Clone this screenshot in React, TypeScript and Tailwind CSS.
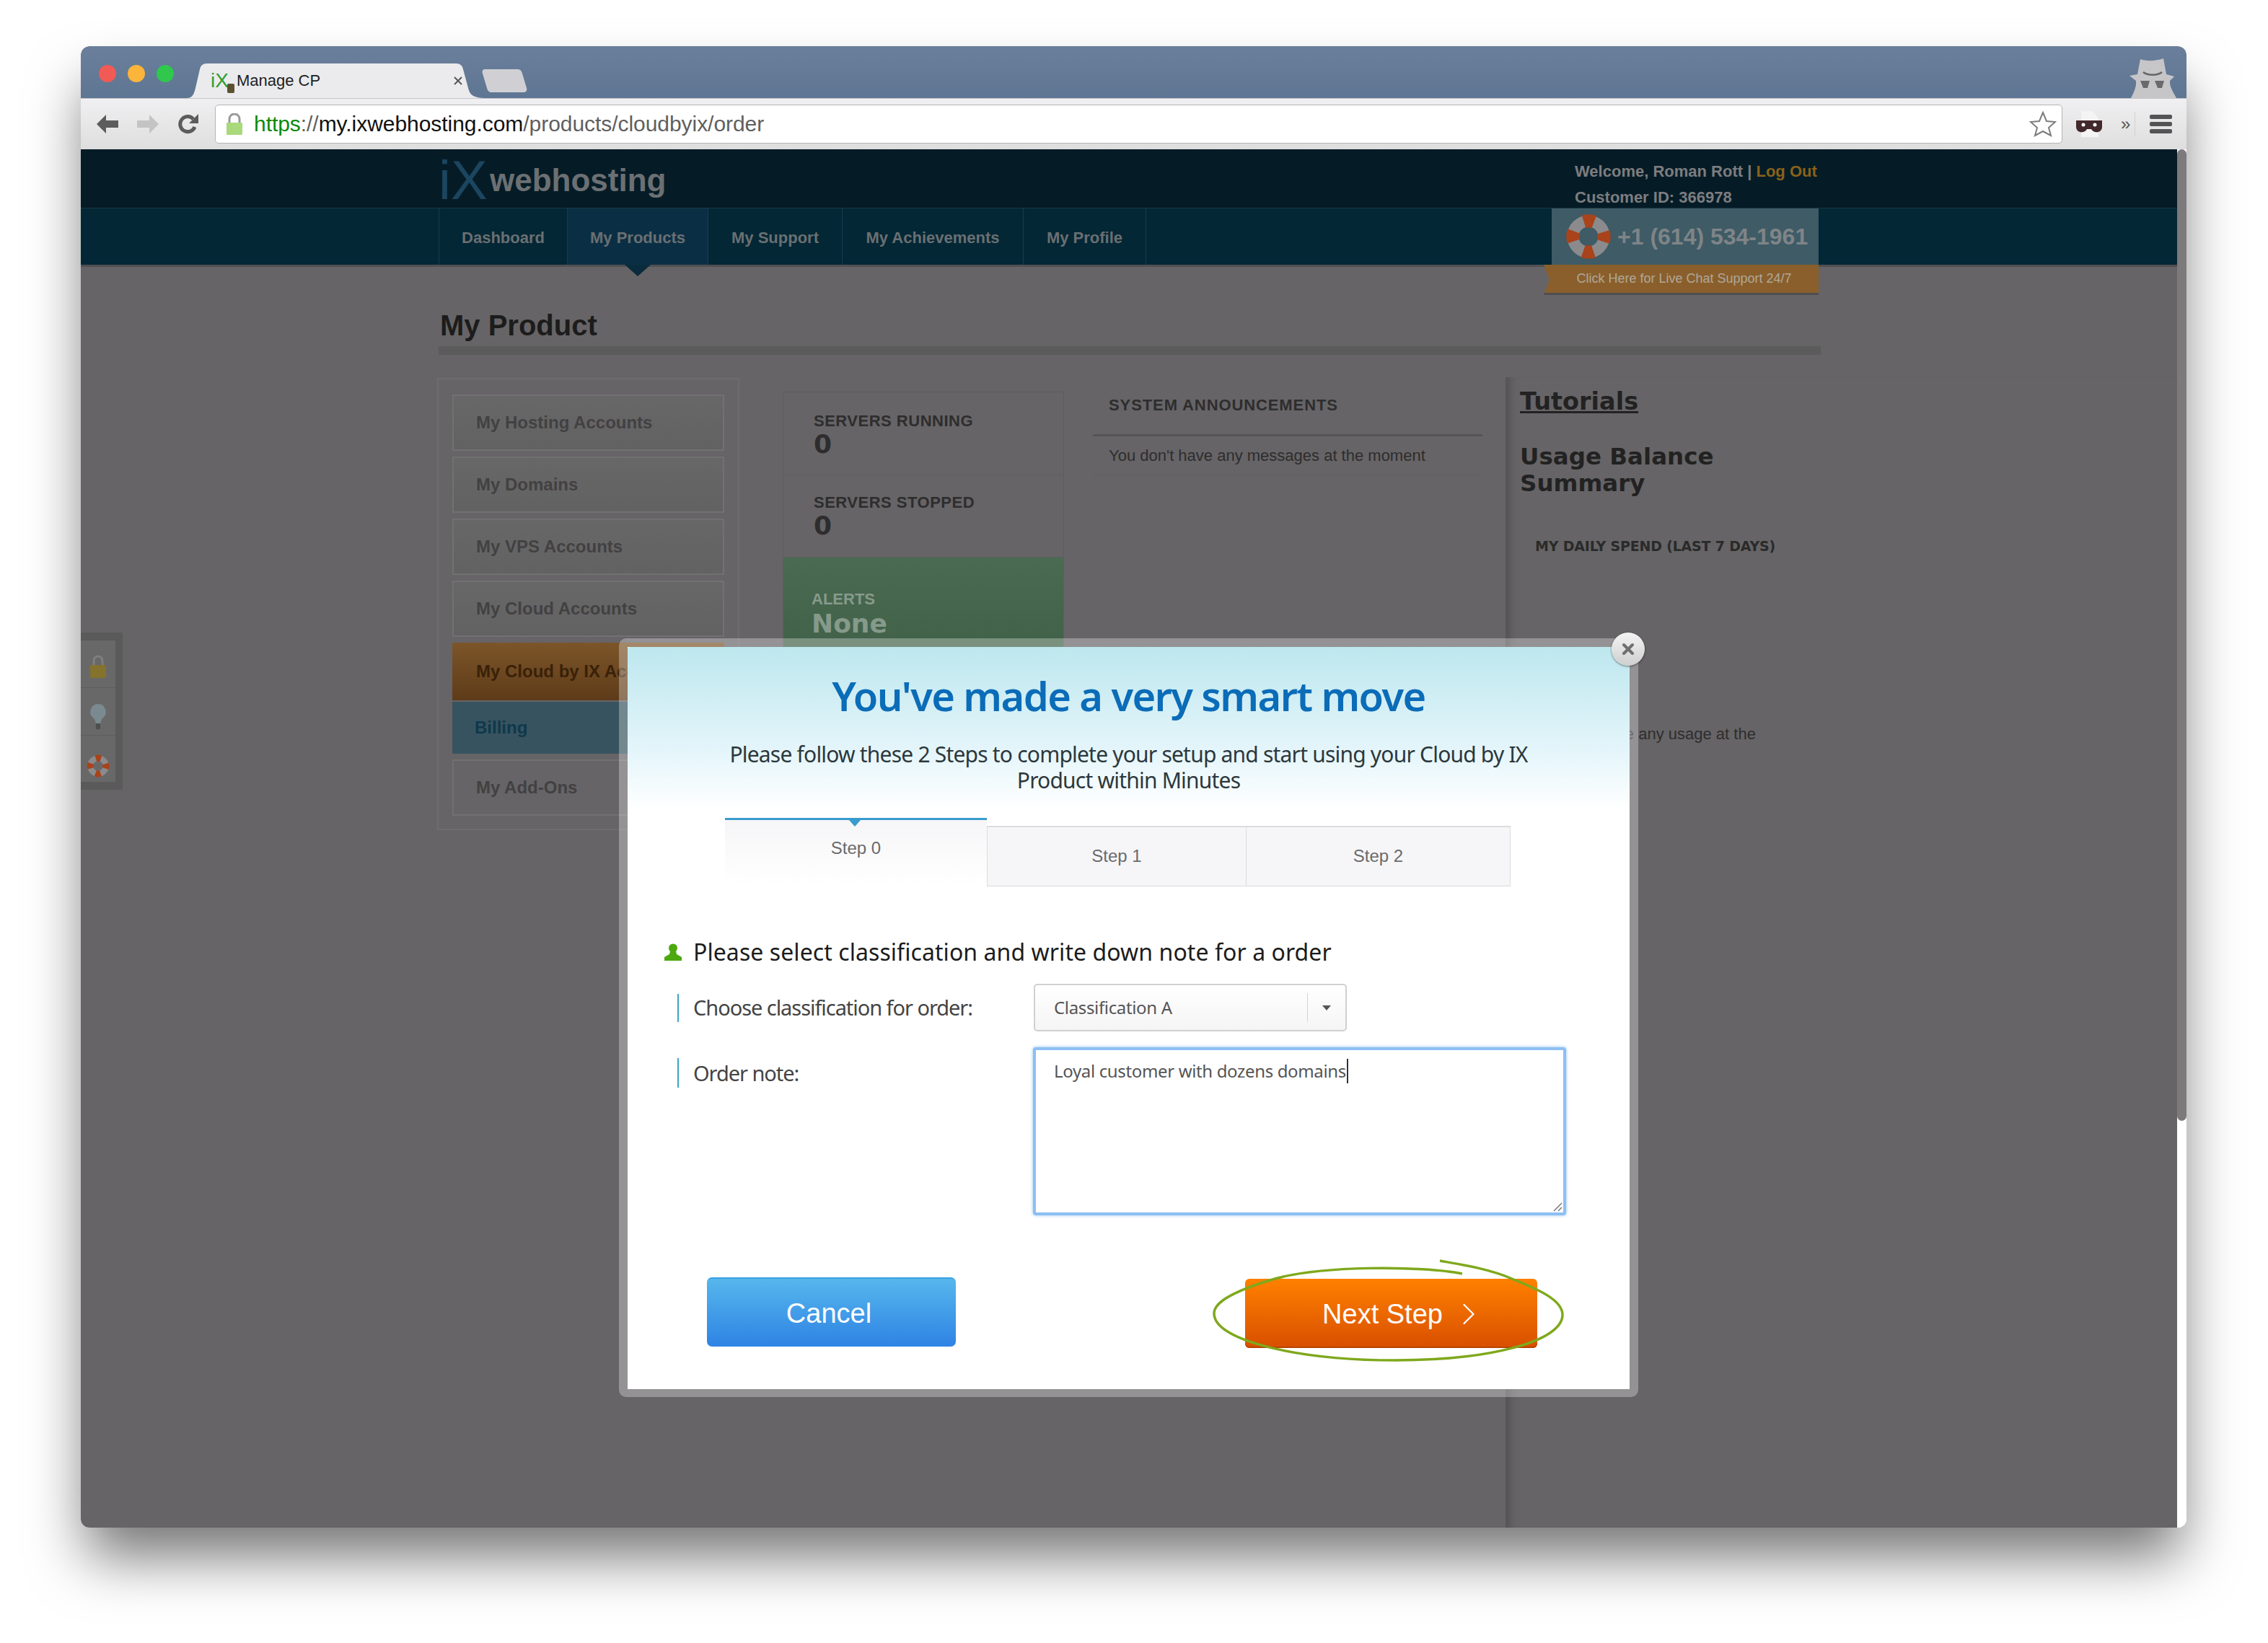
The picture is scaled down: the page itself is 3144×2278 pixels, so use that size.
import { ChevronRight, X } from 'lucide-react'

const sideItems = ['My Hosting Accounts', 'My Domains', 'My VPS Accounts', 'My Cloud Accounts']
const navItems = [
  { label: 'Dashboard', width: 'w-[178px]' },
  { label: 'My Products', width: 'w-[195px]', active: true },
  { label: 'My Support', width: 'w-[186px]' },
  { label: 'My Achievements', width: 'w-[251px]' },
  { label: 'My Profile', width: 'w-[170px]' },
]

function Lifebuoy({ size }: { size: number }) {
  return (
    <svg width={size} height={size} viewBox="0 0 40 40" className="shrink-0">
      <circle cx="20" cy="20" r="13.5" fill="none" stroke="#8b8b8d" strokeWidth="10" />
      <circle cx="20" cy="20" r="13.5" fill="none" stroke="#a8431b" strokeWidth="11.5" strokeDasharray="9 12.2" strokeDashoffset="4.5" />
    </svg>
  )
}

function Favicon() {
  return (
    <span className="relative flex h-[36px] w-[35px] items-center font-['Liberation_Sans',sans-serif] text-[28px] leading-none text-[#2f9e2f]">
      iX
      <span className="absolute bottom-[1px] right-[2px] h-[13px] w-[10px] rounded-[2px] bg-[#5d5030]" />
    </span>
  )
}

function Toolbar() {
  return (
    <div className="flex h-[71px] items-center border-t border-[#c4c6ca] bg-gradient-to-b from-[#f0f0f2] to-[#dedede]">
      <svg width="36" height="30" viewBox="0 0 36 30" className="ml-[19px]">
        <path d="M16 2 3 15l13 13v-8h17v-10H16z" fill="#5c5c5c" />
      </svg>
      <svg width="36" height="30" viewBox="0 0 36 30" className="ml-[20px]">
        <path d="M20 2l13 13-13 13v-8H3v-10h17z" fill="#c4c4c4" />
      </svg>
      <svg width="30" height="32" viewBox="0 0 30 32" className="ml-[23px]">
        <path d="M24 20a10.5 10.5 0 1 1-2-11" fill="none" stroke="#5c5c5c" strokeWidth="5" />
        <path d="M29 2v13H16z" fill="#5c5c5c" />
      </svg>
      <div className="ml-[22px] flex h-[54px] w-[2561px] items-center rounded-[5px] border border-[#b4b4b6] bg-white pl-[14px] pr-[7px]">
        <svg width="24" height="30" viewBox="0 0 24 30">
          <path d="M5 14V8a7 7 0 0 1 14 0v6" fill="none" stroke="#9a9a9a" strokeWidth="3" />
          <rect x="1" y="13" width="22" height="17" rx="1.5" fill="#a9d97b" />
        </svg>
        <span className="ml-[15px] text-[30px] leading-none tracking-[-0.05px] text-[#5f5f5f]">
          <span className="text-[#0b8a0b]">https</span>
          ://
          <span className="text-[#111]">my.ixwebhosting.com</span>
          /products/cloudbyix/order
        </span>
        <svg width="38" height="36" viewBox="0 0 38 36" className="ml-auto">
          <path d="M19 2l5 12 12 1-9 8 3 11-11-6-11 6 3-11-9-8 12-1z" fill="#fff" stroke="#7c7c7c" strokeWidth="2" />
        </svg>
      </div>
      <svg width="38" height="36" viewBox="0 0 38 36" className="ml-[18px]">
        <path d="M8 0h16l8 10v26H8z" fill="#f4f4f4" />
        <path d="M1 13h36v9c0 8-11 10-15 3h-6c-4 7-15 5-15-3z" fill="#43282c" />
        <circle cx="11" cy="19" r="2.5" fill="#fff" />
        <circle cx="27" cy="19" r="2.5" fill="#fff" />
      </svg>
      <span className="ml-[25px] text-[24px] leading-none text-[#555]">»</span>
      <div className="ml-[6px] h-[34px] w-px bg-[#d2d2d4]" />
      <div className="ml-[20px] flex w-[31px] flex-col gap-[4px]">
        <div className="h-[6px] rounded-[2px] bg-[#545456]" />
        <div className="h-[6px] rounded-[2px] bg-[#545456]" />
        <div className="h-[6px] rounded-[2px] bg-[#545456]" />
      </div>
    </div>
  )
}

function TabStrip() {
  return (
    <div className="relative flex h-[72px] items-end rounded-t-[12px] bg-gradient-to-b from-[#6b7f9b] to-[#5e7693]">
      <div className="mb-[22px] ml-[25px] flex gap-[16px]">
        <div className="h-[24px] w-[24px] rounded-full bg-[#f25a55]" />
        <div className="h-[24px] w-[24px] rounded-full bg-[#fbb53a]" />
        <div className="h-[24px] w-[24px] rounded-full bg-[#2fc84c]" />
      </div>
      <div className="relative ml-[18px] flex h-[48px] w-[415px] items-center pl-[33px] pr-[30px]">
        <svg width="415" height="48" viewBox="0 0 415 48" className="absolute inset-0">
          <path d="M0 48c8 0 10-6 12-14l6-26c1-5 4-8 10-8h345c6 0 9 3 10 8l7 26c2 8 5 14 25 14z" fill="#ebebed" />
        </svg>
        <span className="relative">
          <Favicon />
        </span>
        <span className="relative ml-[1px] text-[22px] leading-none text-[#222]">Manage CP</span>
        <X className="relative ml-auto h-[18px] w-[18px] text-[#555]" strokeWidth={2.5} />
      </div>
      <svg width="66" height="32" viewBox="0 0 66 32" className="mb-[8px] -ml-[6px]">
        <path d="M5 0h44c4 0 6 2 7 6l6 20c1 4-1 6-5 6H14c-4 0-6-2-7-6L1 6C0 2 1 0 5 0z" fill="#d0d0d4" />
      </svg>
      <svg width="66" height="56" viewBox="0 0 66 56" className="ml-auto mr-[14px]">
        <path d="M16 2c8 3 20 3 32-1l4 22 11 3-6 6c-1 8 5 16 9 24H3c4-8 8-16 7-24L1 25l11-2z" fill="#c6c6c8" />
        <path d="M20 20c6 5 20 5 26 0" fill="none" stroke="#666" strokeWidth="2.5" />
        <path d="M16 32h13l-3 10h-6zM36 32h13l-3 10h-6z" fill="#6a6a6a" />
      </svg>
    </div>
  )
}

function SiteHeader() {
  return (
    <>
      <div className="flex h-[81px] bg-[#051c27]">
        <div className="ml-[496px] flex h-full w-[1498px] items-center pt-[4px]">
          <span className="w-[71px] text-[76px] leading-none text-[#1c4560]">iX</span>
          <span className="text-[44px] font-bold leading-none text-[#6c7073]">webhosting</span>
        </div>
        <div className="ml-[77px] flex flex-col pt-[13px] text-[22px] font-bold leading-[36px] text-[#7d7d7f]">
          <div>
            Welcome, Roman Rott | <span className="text-[#8a6218]">Log Out</span>
          </div>
          <div>Customer ID: 366978</div>
        </div>
      </div>
      <div className="relative flex h-[82px] border-t border-[#1c3743] border-b-[3px] border-b-[#505052] bg-[#032735]">
        <div className="ml-[496px] flex border-l border-[#1a3c4c]">
          {navItems.map((item) => (
            <div
              key={item.label}
              className={`relative flex items-center justify-center border-r border-[#1a3c4c] pt-[2px] text-[22px] font-bold text-[#6a6f72] ${item.width} ${item.active ? 'bg-[#0a2f45]' : ''}`}
            >
              {item.label}
              {item.active && (
                <div className="absolute left-[79px] top-full h-0 w-0 border-x-[18px] border-t-[16px] border-x-transparent border-t-[#0a2b3c]" />
              )}
            </div>
          ))}
        </div>
        <div className="ml-[562px] flex h-full w-[370px] items-center bg-[#3e5b66] pl-[19px]">
          <Lifebuoy size={64} />
          <span className="ml-[8px] whitespace-nowrap text-[32px] font-bold leading-none text-[#7f8487]">+1 (614) 534-1961</span>
        </div>
        <div className="absolute left-[2028px] top-full flex h-[42px] w-[381px] items-center justify-center border-b-[3px] border-[#4f4f51] bg-[#8a5f2c] pl-[8px] text-[18px] text-[#b0a898] [clip-path:polygon(0_0,100%_0,100%_100%,0_100%,8px_50%)]">
          Click Here for Live Chat Support 24/7
        </div>
      </div>
    </>
  )
}

function SideWidget() {
  return (
    <div className="absolute left-0 top-[670px] flex h-[218px] w-[58px] flex-col items-center border-y-[11px] border-r-[10px] border-[#5b5a5b] bg-[#696869]">
      <div className="flex h-[66px] w-full items-center justify-center border-b border-[#5f5e5f] pt-[6px]">
        <svg width="24" height="34" viewBox="0 0 24 34">
          <path d="M6 16V9a6 6 0 0 1 12 0v7" fill="none" stroke="#7f7f7f" strokeWidth="3" />
          <rect x="1" y="15" width="22" height="18" rx="2" fill="#85722c" />
        </svg>
      </div>
      <div className="flex h-[66px] w-full items-center justify-center border-b border-[#5f5e5f] pt-[14px]">
        <svg width="24" height="38" viewBox="0 0 24 38">
          <path d="M12 1a11 11 0 0 0-6 20c2 2 2 5 3 7h6c1-2 1-5 3-7A11 11 0 0 0 12 1z" fill="#7a8a90" />
          <rect x="9" y="28" width="6" height="8" fill="#4e4e4e" />
        </svg>
      </div>
      <div className="flex h-[64px] items-center justify-center pt-[20px]">
        <Lifebuoy size={32} />
      </div>
    </div>
  )
}

function PageBody() {
  return (
    <div className="ml-[496px] pt-[57px]">
      <h1 className="ml-[2px] text-[40px] font-bold leading-[48px] text-[#1c1c1c]">My Product</h1>
      <div className="mt-[5px] h-[12px] w-[1916px] bg-[#5c5b5c]" />
      <div className="mt-[31px] flex">
        <div className="-ml-[2px] mt-[1px] flex h-[627px] w-[419px] shrink-0 flex-col border-2 border-[#6e6d6e] px-[19px] pt-[21px] font-bold text-[#424142]">
          <div className="flex flex-col gap-[8px] text-[24px]">
            {sideItems.map((item) => (
              <div key={item} className="flex h-[78px] items-center border-2 border-[#727172] bg-gradient-to-b from-[#686768] to-[#636263] pl-[31px]">
                {item}
              </div>
            ))}
            <div className="flex h-[80px] items-center whitespace-nowrap bg-gradient-to-b from-[#7c5529] to-[#5e3b19] pl-[33px] text-[#392108]">
              My Cloud by IX Accounts
            </div>
          </div>
          <div className="mt-[2px] flex h-[72px] items-center bg-[#37535f] pl-[31px] text-[24px] text-[#0f384b]">Billing</div>
          <div className="mt-[8px] flex h-[78px] items-center border-2 border-[#727172] pl-[31px] text-[24px]">My Add-Ons</div>
        </div>

        <div className="ml-[60px] mt-[20px] w-[390px] shrink-0 self-start border-x border-[#5f5e5f] text-[#2e2d2e]">
          <div className="h-[116px] border-y border-[#5f5e5f] pl-[42px] pt-[26px]">
            <div className="text-[22px] font-bold leading-[28px] tracking-[0.5px]">SERVERS RUNNING</div>
            <div className="font-['DejaVu_Sans',sans-serif] text-[36px] font-bold leading-[36px]">0</div>
          </div>
          <div className="h-[114px] border-b border-[#5f5e5f] pl-[42px] pt-[24px]">
            <div className="text-[22px] font-bold leading-[28px] tracking-[0.5px]">SERVERS STOPPED</div>
            <div className="font-['DejaVu_Sans',sans-serif] text-[36px] font-bold leading-[36px]">0</div>
          </div>
          <div className="h-[200px] bg-gradient-to-b from-[#4a6a52] to-[#3c5c44] pl-[39px] pt-[44px] text-[#869a8b]">
            <div className="text-[22px] font-bold leading-[28px]">ALERTS</div>
            <div className="font-['DejaVu_Sans',sans-serif] text-[36px] font-bold leading-[40px]">None</div>
          </div>
        </div>

        <div className="ml-[40px] mt-[20px] w-[540px] shrink-0 self-start">
          <div className="h-[62px] border-b-[3px] border-[#565556] pl-[22px] pt-[5px] text-[22px] font-bold leading-[28px] tracking-[0.9px] text-[#2e2d2e]">
            SYSTEM ANNOUNCEMENTS
          </div>
          <div className="flex h-[54px] items-center border-b border-[#5f5e5f] pl-[22px] text-[22px] text-[#2e2d2e]">
            You don't have any messages at the moment
          </div>
        </div>

        <div className="ml-[32px] h-[1595px] flex-1 border-l-2 border-[#585658] pl-[18px] pt-[14px] shadow-[inset_14px_0_14px_-12px_rgba(0,0,0,0.25)]">
          <div className="font-['DejaVu_Sans',sans-serif] text-[33.5px] font-bold leading-[40px] text-[#222] underline">Tutorials</div>
          <div className="mt-[38px] w-[400px] font-['DejaVu_Sans',sans-serif] text-[32.5px] font-bold leading-[37px] text-[#222]">
            Usage Balance
            <br />
            Summary
          </div>
          <div className="ml-[21px] mt-[54px] font-['DejaVu_Sans',sans-serif] text-[19px] font-bold leading-[28px] tracking-[-0.2px] text-[#2a2a2a]">
            MY DAILY SPEND (LAST 7 DAYS)
          </div>
          <div className="ml-[14px] mt-[233px] text-[22px] leading-[28px] text-[#2e2d2e]">You don't have any usage at the</div>
        </div>
      </div>
    </div>
  )
}

function OrderModal() {
  return (
    <div className="absolute left-[746px] top-[678px] h-[1052px] w-[1413px] rounded-[10px] border-[12px] border-b-[11px] border-white/30 bg-white bg-clip-padding">
      <div className="absolute -right-[21px] -top-[20px] z-10 flex h-[46px] w-[46px] items-center justify-center rounded-full bg-gradient-to-b from-[#f4f4f4] to-[#cfcfcf] shadow-[0_1px_3px_rgba(0,0,0,0.5)]">
        <X className="h-[24px] w-[24px] text-[#6f6f6f]" strokeWidth={4} />
      </div>
      <div className="flex h-full flex-col rounded-[4px] bg-[linear-gradient(#bde7ee_0px,#e6f6fb_150px,#ffffff_225px)] font-['Noto_Sans',sans-serif]">
        <h2 className="mt-[32px] text-center text-[56px] font-semibold leading-[70px] tracking-[-1.6px] text-[#0b6cb8]">You've made a very smart move</h2>
        <p className="mt-[29px] text-center text-[30px] leading-[36px] tracking-[-0.8px] text-[#2c383c]">
          Please follow these 2 Steps to complete your setup and start using your Cloud by IX
          <br />
          Product within Minutes
        </p>
        <div className="ml-[135px] mt-[34px] flex font-['Liberation_Sans',sans-serif] text-[24px] text-[#6a6a6c]">
          <div className="relative flex h-[95px] w-[363px] justify-center border-t-[3px] border-[#3a9bcd] bg-gradient-to-b from-[#f6f6f8] to-white pt-[21px]">
            Step 0
            <div className="absolute left-[172px] top-0 h-0 w-0 border-x-[8px] border-t-[9px] border-x-transparent border-t-[#3a9bcd]" />
          </div>
          <div className="mt-[11px] flex h-[84px] w-[360px] items-center justify-center border border-t-2 border-[#dcdcde] bg-[#f6f6f8] pb-[2px]">Step 1</div>
          <div className="mt-[11px] flex h-[84px] w-[366px] items-center justify-center border border-l-0 border-t-2 border-[#dcdcde] bg-[#f6f6f8] pb-[2px]">Step 2</div>
        </div>

        <div className="ml-[51px] mt-[71px] flex h-[40px] items-center gap-[16px] text-[32px] tracking-[0.07px] text-[#1c1c1c]">
          <svg width="24" height="24" viewBox="0 0 24 24">
            <circle cx="12" cy="6.5" r="6" fill="#4ca80e" />
            <path d="M8 11h8l1 4 7 4v5H0v-5l7-4z" fill="#4ca80e" />
          </svg>
          Please select classification and write down note for a order
        </div>

        <div className="ml-[69px] mt-[24px] flex h-[66px] items-center">
          <div className="flex h-[39px] w-[494px] items-center border-l-2 border-[#3aa6c8] pl-[20px] text-[29px] tracking-[-1.05px] text-[#444]">
            Choose classification for order:
          </div>
          <div className="flex h-[66px] w-[434px] items-center rounded-[5px] border-2 border-[#d0d0d2] bg-gradient-to-b from-white to-[#f5f5f6] pl-[26px] text-[24px] tracking-[-0.35px] text-[#555]">
            Classification A
            <div className="ml-auto flex h-[40px] w-[53px] items-center justify-center border-l border-[#d4d4d6]">
              <div className="h-0 w-0 border-x-[6px] border-t-[7px] border-x-transparent border-t-[#555]" />
            </div>
          </div>
        </div>

        <div className="ml-[69px] mt-[22px] flex items-start">
          <div className="mt-[15px] flex h-[41px] w-[493px] items-center border-l-2 border-[#3aa6c8] pl-[20px] text-[29px] tracking-[-1.05px] text-[#444]">Order note:</div>
          <div className="relative h-[233px] w-[739px] rounded-[4px] border-[4px] border-[#8dbff2] bg-white pl-[25px] pt-[12px] text-[24px] leading-[34px] tracking-[-0.35px] text-[#555] shadow-[0_0_4px_#8dbff2]">
            Loyal customer with dozens domains
            <span className="ml-[1px] inline-block h-[34px] w-[2px] bg-[#333] align-top" />
            <svg width="14" height="14" viewBox="0 0 14 14" className="absolute bottom-[1px] right-[1px]">
              <path d="M13 2 2 13M13 8 8 13" stroke="#777" strokeWidth="1.5" />
            </svg>
          </div>
        </div>

        <div className="ml-[110px] mt-[86px] flex items-start font-['Liberation_Sans',sans-serif] text-[38px] leading-none text-white">
          <div className="flex h-[96px] w-[345px] items-center justify-center rounded-[7px] border-t-2 border-[#38a0e2] bg-gradient-to-b from-[#57b6ec] to-[#2f83e4] pr-[7px] pt-[2px]">Cancel</div>
          <div className="relative ml-[401px] mt-[2px] flex h-[96px] w-[405px] items-center justify-center rounded-[6px] bg-gradient-to-b from-[#ff8000] to-[#d84f00] pl-[38px] pt-[2px] shadow-[inset_0_-2px_0_#b84400]">
            Next Step
            <ChevronRight className="ml-[10px] h-[52px] w-[52px]" strokeWidth={1} />
            <svg width="520" height="150" viewBox="0 0 520 150" className="absolute -left-[52px] -top-[28px]">
              <path
                d="M353 21C300 10 150 8 80 32 30 48 9 62 9 76c0 39 121 65 252 65 129 0 231-26 231-63 0-23-42-38-70-50C390 14 350 8 322 3"
                fill="none"
                stroke="#7fa81c"
                strokeWidth="3.5"
              />
            </svg>
          </div>
        </div>
      </div>
    </div>
  )
}

export default function App() {
  return (
    <div className="h-[2278px] w-[3144px] overflow-hidden bg-white pl-[112px] pt-[64px] font-['Liberation_Sans',sans-serif]">
      <div className="flex h-[2054px] w-[2919px] flex-col overflow-hidden rounded-[12px] shadow-[0_48px_80px_-8px_rgba(0,0,0,0.55)]">
        <TabStrip />
        <Toolbar />
        <div className="flex flex-1">
          <div className="relative flex-1 bg-[#666466]">
            <SiteHeader />
            <PageBody />
            <SideWidget />
            <OrderModal />
          </div>
          <div className="w-[13px] bg-white">
            <div className="h-[1347px] rounded-full bg-[#7d7a7c]" />
          </div>
        </div>
      </div>
    </div>
  )
}
